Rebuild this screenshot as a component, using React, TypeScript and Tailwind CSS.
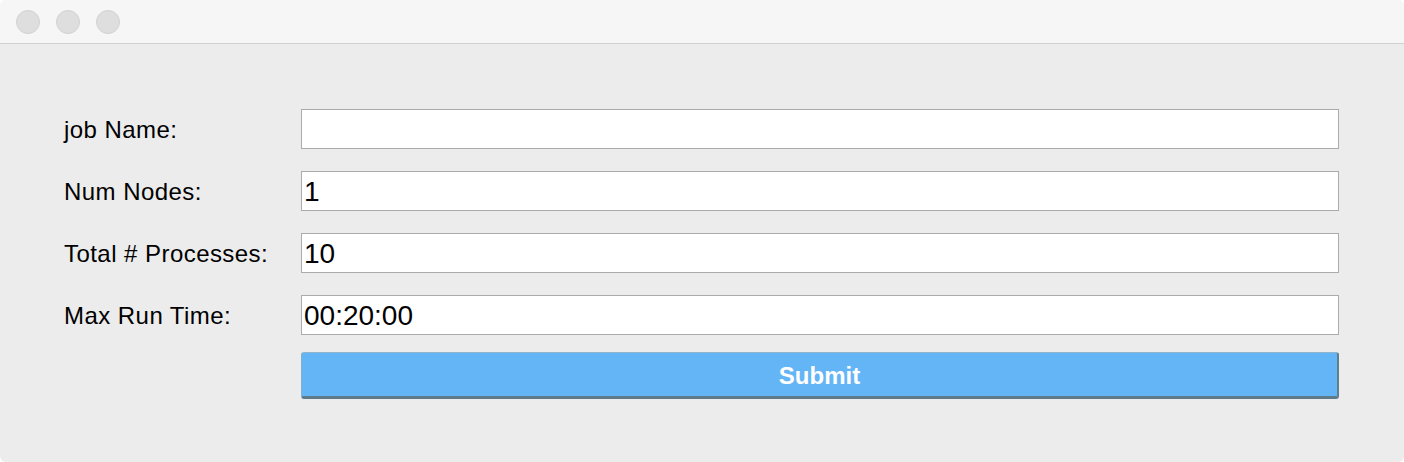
import React, { useState } from 'react'

const fields = [
  { label: 'job Name:', initial: '' },
  { label: 'Num Nodes:', initial: '1' },
  { label: 'Total # Processes:', initial: '10' },
  { label: 'Max Run Time:', initial: '00:20:00' },
]

const TrafficLight: React.FC = () => (
  <span className="block h-[24px] w-[24px] rounded-full border border-[#d2d2d2] bg-[#dedede]" />
)

export default function App() {
  const [values, setValues] = useState(fields.map((f) => f.initial))

  return (
    <div className="h-[462px] w-[1404px] bg-white font-['Liberation_Sans',Arial,sans-serif]">
      <div className="flex h-full flex-col overflow-hidden rounded-[6px] bg-[#ececec]">
        <div className="flex h-[44px] shrink-0 items-center gap-[16px] border-b border-[#d0d0d0] bg-[#f6f6f6] pl-[16px]">
          <TrafficLight />
          <TrafficLight />
          <TrafficLight />
        </div>

        <div className="pl-[64px] pr-[65px] pt-[65px]">
          <div className="flex flex-col gap-[22px]">
            {fields.map((f, i) => (
              <div key={f.label} className="flex h-[40px] items-center">
                <label className="w-[237px] shrink-0 pt-[2px] text-[24px] leading-none tracking-[0.45px] text-black">
                  {f.label}
                </label>
                <input
                  value={values[i]}
                  onChange={(e) => {
                    const next = [...values]
                    next[i] = e.target.value
                    setValues(next)
                  }}
                  className="h-[40px] flex-1 border border-[#ababab] bg-white px-[2px] pt-[2px] text-[28px] text-black outline-none"
                />
              </div>
            ))}
          </div>
          <div className="mt-[17px] flex">
            <div className="w-[237px] shrink-0" />
            <button className="h-[47px] flex-1 rounded-[3px] border-t border-l border-r-2 border-b-[3px] border-t-[#8db6cd] border-l-[#7fb0cf] border-r-[#5f7e8f] border-b-[#5f7a89] bg-[#64b5f6] pt-[2px] text-[24px] font-bold text-white">
              Submit
            </button>
          </div>
        </div>
      </div>
    </div>
  )
}
